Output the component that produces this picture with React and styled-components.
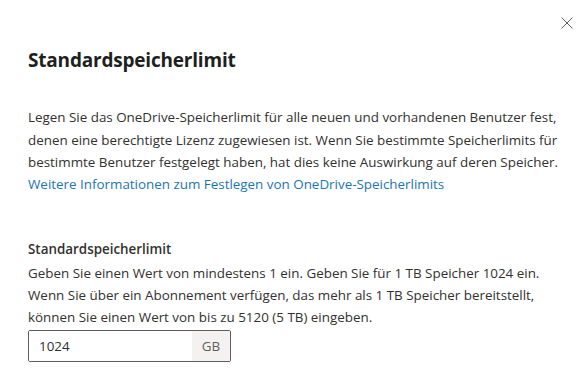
import React from "react";
import styled, { createGlobalStyle } from "styled-components";

const Global = createGlobalStyle`
  html, body { margin: 0; padding: 0; background: #ffffff; }
  body { font-family: "Open Sans", "Noto Sans", sans-serif; color: #323130; }
`;

const Panel = styled.div`
  position: relative;
  width: 588px;
  height: 378px;
  box-sizing: border-box;
  padding: 44px 28px 0 28px;
  background: #fff;
  overflow: hidden;
`;

const CloseButton = styled.button`
  position: absolute;
  top: 11px;
  right: 9px;
  width: 24px;
  height: 24px;
  border: 0;
  padding: 0;
  background: transparent;
  display: flex;
  align-items: center;
  justify-content: center;
  cursor: pointer;
`;

const Title = styled.h1`
  margin: 0;
  font-size: 19px;
  font-weight: 700;
  line-height: 32px;
  color: #201f1e;
  letter-spacing: -0.2px;
`;

const Paragraph = styled.p`
  margin: 30px 0 0 0;
  font-size: 13.4px;
  line-height: 22.5px;
  color: #323130;
  letter-spacing: 0;
  white-space: nowrap;
`;

const Link = styled.a`
  display: block;
  margin-top: 0;
  font-size: 13.4px;
  line-height: 20px;
  color: #1b75b5;
  text-decoration: none;
`;

const Field = styled.div`
  margin-top: 45px;
  display: flex;
  flex-direction: column;
`;

const Label = styled.label`
  font-size: 13.4px;
  font-weight: 600;
  line-height: 20px;
  color: #323130;
`;

const Help = styled.div`
  margin-top: 3px;
  font-size: 13.4px;
  line-height: 22px;
  color: #323130;
  white-space: nowrap;
`;

const InputGroup = styled.div`
  margin-top: 2px;
  width: 203px;
  height: 32px;
  box-sizing: border-box;
  border: 1px solid #605e5c;
  border-radius: 2px;
  display: flex;
  align-items: stretch;
  overflow: hidden;
`;

const Input = styled.input`
  flex: 1;
  min-width: 0;
  border: 0;
  outline: none;
  padding: 0 8px 0 10px;
  font-family: inherit;
  font-size: 13.4px;
  color: #323130;
  background: #fff;
`;

const Suffix = styled.span`
  width: 38px;
  display: flex;
  align-items: center;
  justify-content: center;
  background: #f3f2f1;
  font-size: 13.4px;
  color: #605e5c;
`;

export default function App() {
  return (
    <>
      <Global />
      <Panel>
        <CloseButton aria-label="Schließen">
          <svg width="12" height="12" viewBox="0 0 12 12">
            <path d="M0.5 0.5 L11.5 11.5 M11.5 0.5 L0.5 11.5" stroke="#605e5c" strokeWidth="1" fill="none" />
          </svg>
        </CloseButton>
        <Title>Standardspeicherlimit</Title>
        <Paragraph>
          Legen Sie das OneDrive-Speicherlimit für alle neuen und vorhandenen Benutzer fest,
          <br />
          denen eine berechtigte Lizenz zugewiesen ist. Wenn Sie bestimmte Speicherlimits für
          <br />
          bestimmte Benutzer festgelegt haben, hat dies keine Auswirkung auf deren Speicher.
        </Paragraph>
        <Link href="#">Weitere Informationen zum Festlegen von OneDrive-Speicherlimits</Link>
        <Field>
          <Label htmlFor="limit">Standardspeicherlimit</Label>
          <Help>
            Geben Sie einen Wert von mindestens 1 ein. Geben Sie für 1 TB Speicher 1024 ein.
            <br />
            Wenn Sie über ein Abonnement verfügen, das mehr als 1 TB Speicher bereitstellt,
            <br />
            können Sie einen Wert von bis zu 5120 (5 TB) eingeben.
          </Help>
          <InputGroup>
            <Input id="limit" defaultValue="1024" />
            <Suffix>GB</Suffix>
          </InputGroup>
        </Field>
      </Panel>
    </>
  );
}
